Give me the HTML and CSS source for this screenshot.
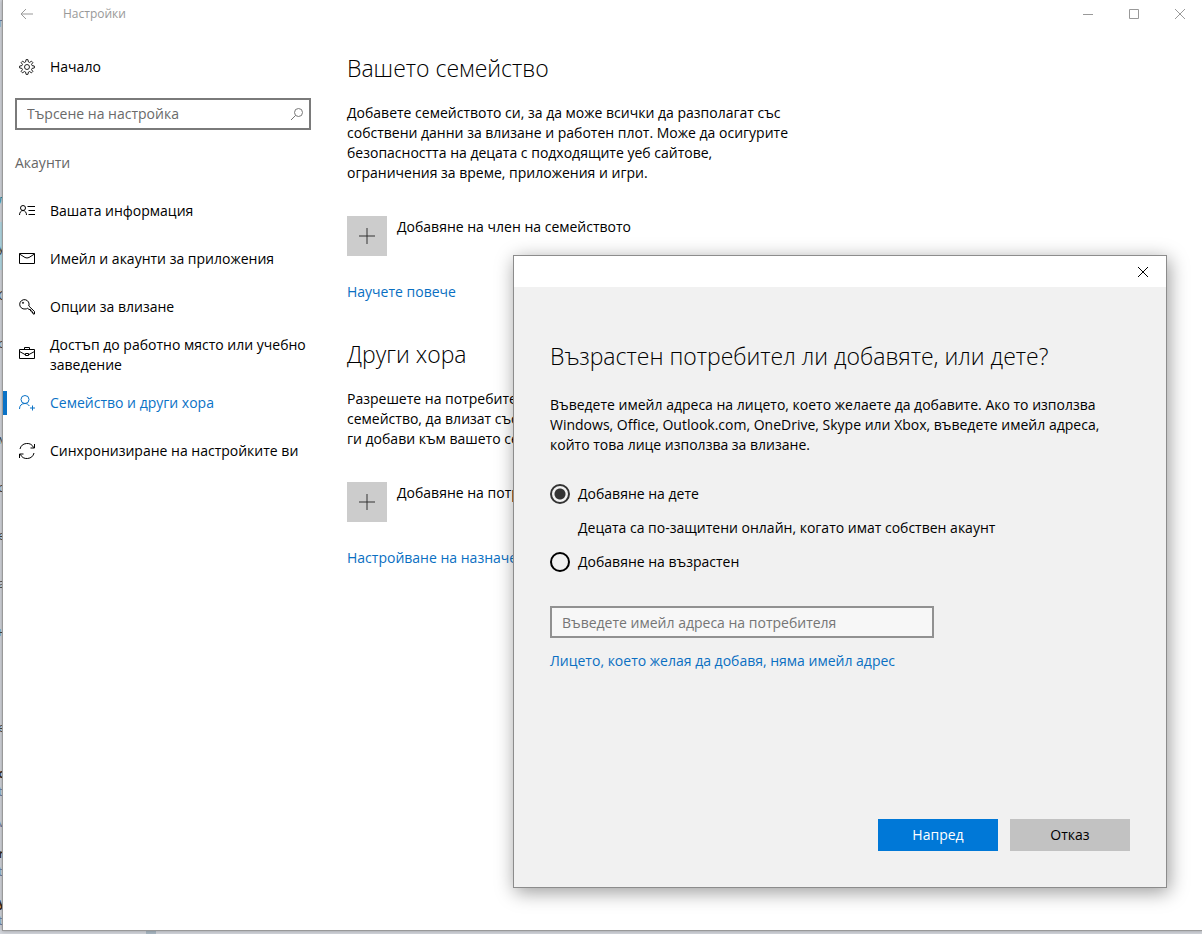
FILE: index.html
```html
<!DOCTYPE html>
<html lang="bg">
<head>
    <meta charset="UTF-8">
    <meta name="viewport" content="width=device-width, initial-scale=1.0">
    <title>Настройки</title>
    <link rel="stylesheet" href="styles.css">
</head>
<body>
    <!-- page that lies under the settings window -->
    <div class="backdrop" aria-hidden="true">
        <span class="short blue">г</span>
        <span class="tall"></span>
        <span class="tall"></span>
        <span class="tall"></span>
        <span class="row teal">л</span>
        <span class="row selected">у</span>
        <span class="row">С</span>
        <span class="row">о</span>
        <span class="row"></span>
        <span class="row">м</span>
        <span class="row">с</span>
        <span class="row">е</span>
        <span class="row">а</span>
        <span class="row">н</span>
        <span class="row"></span>
        <span class="row">е</span>
        <span class="space"></span>
        <span class="line bold">о</span>
        <span class="line blue">t</span>
        <span class="space"></span>
        <span class="line blue">v</span>
        <span class="space"></span>
        <span class="line bold">r</span>
        <span class="line blue">t</span>
        <span class="space"></span>
        <span class="line bold">y</span>
        <span class="last blue">thday today <i class="block"></i></span>
    </div>

    <div class="window">
        <header class="titlebar">
            <button class="back" aria-label="Назад">
                <svg width="14" height="12" viewBox="0 0 14 12"><path d="M13 6H1M6 1L1 6l5 5"/></svg>
            </button>
            <span class="title">Настройки</span>
            <button class="control" aria-label="Минимизиране">
                <svg width="12" height="12" viewBox="0 0 12 12"><path d="M1 6.500h10"/></svg>
            </button>
            <button class="control" aria-label="Максимизиране">
                <svg width="12" height="12" viewBox="0 0 12 12"><path d="M1.500 1.500h9v9h-9z"/></svg>
            </button>
            <button class="control" aria-label="Затваряне">
                <svg width="12" height="12" viewBox="0 0 12 12"><path d="M1 1l10 10M11 1L1 11"/></svg>
            </button>
        </header>

        <div class="content">
            <nav class="sidebar">
                <a class="nav-item" href="#">
                    <svg width="16" height="16" viewBox="0.600 -0.400 14.800 14.800" stroke-width=".800">
                        <path d="M6.700 2.300L7.100.200h1.800l.400 2.100 1.100.500 1.700-1.200 1.300 1.300-1.200 1.700.500 1.100 2.100.400v1.800l-2.100.400-.500 1.100 1.200 1.700-1.300 1.300-1.700-1.200-1.100.500-.400 2.100H7.100l-.400-2.100-1.100-.500-1.700 1.200-1.300-1.300 1.200-1.700-.500-1.100-2.100-.400V6.100l2.100-.400.500-1.100-1.200-1.700 1.300-1.300 1.700 1.200z"/>
                        <circle cx="8" cy="7" r="2.300"/>
                    </svg>
                    <span>Начало</span>
                </a>
                <div class="search">
                    <input type="search" aria-label="Търсене на настройка" placeholder="Търсене на настройка">
                    <svg width="14" height="14" viewBox="0 0 14 14"><circle cx="8.500" cy="5.500" r="4"/><path d="M5.600 8.400L1 13"/></svg>
                </div>
                <h2 class="group">Акаунти</h2>
                <a class="nav-item" href="#">
                    <svg width="16" height="16" viewBox="0 0 16 16">
                        <circle cx="4" cy="5" r="2.500"/>
                        <path d="M.500 12c0-2.500 1.500-4.500 3.500-4.500s3.500 2 3.500 4.500M8.500 3.500H16M9.500 7.500H16M9.500 11.500H16"/>
                    </svg>
                    <span>Вашата информация</span>
                </a>
                <a class="nav-item" href="#">
                    <svg width="16" height="16" viewBox="0 0 16 16"><path d="M.500 2.500h15v10H.500zM.500 3l5.500 3.500q2 1 4 0L15.500 3"/></svg>
                    <span>Имейл и акаунти за приложения</span>
                </a>
                <a class="nav-item" href="#">
                    <svg width="16" height="16" viewBox="0 0 16 16">
                        <path d="M8.700 9.300L10 10.500h1.500V12H13v1.500h1V15h1.500v-2.500L9.800 7a4.700 4.700 0 1 0-3.800 3c1 0 1.900-.200 2.700-.700z"/>
                        <circle cx="4" cy="3.800" r=".600"/>
                    </svg>
                    <span>Опции за влизане</span>
                </a>
                <a class="nav-item" href="#">
                    <svg width="16" height="16" viewBox="0 0 16 16"><path d="M.500 2.500h15v9H.500zM5.500 2V.500h5V2M.500 4.500L6 7.500M15.500 4.500L10 7.500M6.500 6.500h3v2h-3z"/></svg>
                    <span>Достъп до работно място или учебно заведение</span>
                </a>
                <a class="nav-item active" href="#">
                    <svg width="16" height="16" viewBox="0 0 16 16">
                        <circle cx="6" cy="4.500" r="4"/>
                        <path d="M.500 14c0-3.500 2-5.500 5.500-5.500 2 0 3.500 1 4.300 2.500M13.500 10.500v5M11 13h5"/>
                    </svg>
                    <span>Семейство и други хора</span>
                </a>
                <a class="nav-item" href="#">
                    <svg width="16" height="16" viewBox="0 0 16 16">
                        <path d="M1 6a7.300 7.300 0 0 1 13.700-1.300M15.500 1v4h-4M15 10a7.300 7.300 0 0 1-13.700 1.300M.500 15v-4h4"/>
                    </svg>
                    <span>Синхронизиране на настройките ви</span>
                </a>
            </nav>

            <main class="page">
                <section>
                    <h1>Вашето семейство</h1>
                    <p>Добавете семейството си, за да може всички да разполагат със собствени данни за влизане и работен плот. Може да осигурите безопасността на децата с подходящите уеб сайтове, ограничения за време, приложения и игри.</p>
                    <button class="add">
                        <span class="plus"><svg width="16" height="16" viewBox="0 0 16 16"><path d="M8 0v16M0 8h16"/></svg></span>
                        Добавяне на член на семейството
                    </button>
                    <a class="link" href="#">Научете повече</a>
                </section>
                <section>
                    <h1>Други хора</h1>
                    <p>Разрешете на потребители, които не са част от вашето семейство, да влизат със собствените си акаунти. Това няма да ги добави към вашето семейство.</p>
                    <button class="add">
                        <span class="plus"><svg width="16" height="16" viewBox="0 0 16 16"><path d="M8 0v16M0 8h16"/></svg></span>
                        Добавяне на потребител
                    </button>
                    <a class="link" href="#">Настройване на назначен достъп</a>
                </section>
            </main>
        </div>
    </div>

    <div class="dialog" role="dialog" aria-labelledby="dialogTitle">
        <div class="dialog-bar">
            <button class="close" aria-label="Затваряне">
                <svg width="12" height="12" viewBox="0 0 12 12"><path d="M1 1l10 10M11 1L1 11"/></svg>
            </button>
        </div>
        <form class="dialog-body">
            <h1 id="dialogTitle">Възрастен потребител ли добавяте, или дете?</h1>
            <p>Въведете имейл адреса на лицето, което желаете да добавите. Ако то използва Windows, Office, Outlook.com, OneDrive, Skype или Xbox, въведете имейл адреса, който това лице използва за влизане.</p>
            <label class="option"><input type="radio" name="kind" checked>Добавяне на дете</label>
            <p class="hint">Децата са по-защитени онлайн, когато имат собствен акаунт</p>
            <label class="option"><input type="radio" name="kind">Добавяне на възрастен</label>
            <input class="email" type="email" aria-label="Имейл адрес" placeholder="Въведете имейл адреса на потребителя">
            <a class="link" href="#">Лицето, което желая да добавя, няма имейл адрес</a>
            <div class="buttons">
                <button type="button" class="primary">Напред</button>
                <button type="button">Отказ</button>
            </div>
        </form>
    </div>
</body>
</html>
```

FILE: styles.css
```css
* {
    box-sizing: border-box;
}
body {
    display: grid;
    position: relative;
    min-height: 100vh;
    margin: 0;
    overflow: hidden;
    font-family: "Open Sans", "Noto Sans", sans-serif;
    font-size: 14px;
    line-height: 20px;
    color: #000;
}
h1, h2, p {
    margin: 0;
    font-weight: normal;
}
button, input {
    font: inherit;
    color: inherit;
}
button {
    padding: 0;
    border: none;
    background: none;
}
a {
    color: inherit;
    text-decoration: none;
}
svg {
    flex: none;
    fill: none;
    stroke: currentColor;
}

/* Page behind the window */
.backdrop {
    grid-area: 1 / 1;
    display: flex;
    flex-direction: column;
    height: 100vh;
    overflow: hidden;
    background: #d3d6dc;
    font-size: 13px;
    text-indent: -2px;
    color: #444;
}
.backdrop span {
    flex: none;
}
.short {
    height: 24px;
    padding-top: 12px;
}
.tall {
    height: 50px;
}
.row {
    height: 48px;
    padding-top: 15px;
}
.space {
    height: 13px;
}
.line {
    height: 18px;
}
.last {
    display: flex;
    gap: 76px;
    height: 24px;
}
.selected {
    background: #b4dbe6;
}
.teal {
    color: #2a8fa8;
}
.blue {
    color: #6b7da0;
}
.bold {
    font-weight: bold;
    color: #3a2a20;
}
.block {
    width: 10px;
    background: #a9b8c3;
}

/* Settings window */
.window {
    grid-area: 1 / 1;
    z-index: 1;
    margin: 0 -1px 3px 2px;
    border: 1px solid #999;
    border-width: 0 0 1px 1px;
    background: #fff;
    box-shadow: 0 0 4px rgba(0, 0, 0, 0.3);
}
.titlebar {
    display: flex;
    align-items: center;
    height: 28px;
    font-size: 12px;
    color: #999;
}
.back {
    display: flex;
    justify-content: center;
    width: 48px;
}
.title {
    flex: 1;
    padding-left: 12px;
}
.control {
    display: flex;
    justify-content: center;
    width: 46px;
}
.content {
    display: flex;
    gap: 36px;
    padding-top: 15px;
}
.sidebar {
    flex: none;
    width: 308px;
}
.nav-item {
    display: flex;
    align-items: center;
    gap: 15px;
    min-height: 48px;
    padding-left: 16px;
}
.search {
    display: flex;
    align-items: center;
    height: 32px;
    margin: 7px 0 0 12px;
    padding-right: 5px;
    border: 2px solid #7a7a7a;
    color: #777;
}
.search input {
    flex: 1;
    min-width: 0;
    padding: 0 10px;
    border: none;
    outline: none;
    background: none;
}
.search input::placeholder {
    color: #6a6a6a;
}
.group {
    margin: 23px 0 14px 12px;
    font-size: 14px;
    color: #666;
}
.active {
    color: #0a72c6;
    background: linear-gradient(#0a72c6, #0a72c6) left center / 4px 24px no-repeat;
}

/* Right part */
.page {
    flex: 1;
}
.page h1, .dialog h1 {
    font-size: 23px;
    font-weight: 300;
    line-height: 30px;
}
.page section {
    padding-top: 10px;
    margin-bottom: 27px;
}
.page p {
    max-width: 450px;
    margin: 20px 0 33px;
}
.page .add {
    display: flex;
    gap: 10px;
    margin-bottom: 26px;
    line-height: 22px;
}
.plus {
    display: flex;
    align-items: center;
    justify-content: center;
    width: 40px;
    height: 40px;
    background: #ccc;
    color: #333;
}
.link {
    display: block;
    color: #0a6fc2;
}

/* Dialog window over the settings */
.dialog {
    position: absolute;
    z-index: 2;
    top: 255px;
    left: 513px;
    display: flex;
    flex-direction: column;
    width: 654px;
    height: 633px;
    border: 1px solid #8c8c8c;
    background: #f1f1f1;
    box-shadow: 2px 4px 18px rgba(0, 0, 0, 0.4);
}
.dialog-bar {
    display: flex;
    justify-content: flex-end;
    height: 31px;
    background: #fff;
}
.close {
    display: flex;
    align-items: center;
    justify-content: center;
    width: 46px;
}
.dialog-body {
    display: flex;
    flex: 1;
    flex-direction: column;
    padding: 54px 36px 36px;
}
.dialog-body p {
    margin: 24px 0 29px;
}
.option {
    display: flex;
    align-items: center;
    gap: 8px;
}
.option input {
    appearance: none;
    width: 20px;
    height: 20px;
    margin: 0;
    border: 2px solid #000;
    border-radius: 50%;
}
.option input:checked {
    border-color: #333;
    background: radial-gradient(circle, #333 0 5px, transparent 6px);
}
.dialog-body .hint {
    margin: 14px 0 14px 28px;
}
.email {
    width: 384px;
    height: 32px;
    margin: 34px 0 13px;
    padding: 0 10px;
    border: 2px solid #919191;
    outline: none;
    background: #f7f7f7;
}
.email::placeholder {
    color: #757575;
}
.buttons {
    display: flex;
    justify-content: flex-end;
    gap: 12px;
    margin-top: auto;
}
.buttons button {
    width: 120px;
    height: 32px;
    background: #c2c2c2;
}
.buttons .primary {
    background: #0078d7;
    color: #fff;
}
```
